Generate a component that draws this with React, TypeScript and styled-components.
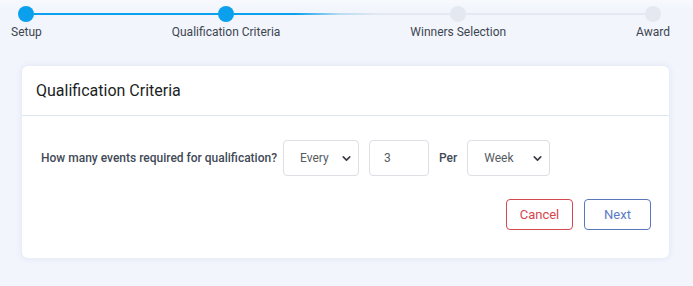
import React, { useState } from 'react';
import styled, { createGlobalStyle } from 'styled-components';
import { ChevronDown } from 'lucide-react';

const GlobalStyle = createGlobalStyle`
  html, body {
    margin: 0;
    padding: 0;
    background: #f2f5fc;
    font-family: Roboto, "Liberation Sans", sans-serif;
  }
`;

const Page = styled.div`
  width: 693px;
  height: 286px;
  background: linear-gradient(#f7f9fd 0, #f2f5fc 10px);
  box-sizing: border-box;
  overflow: hidden;
`;

const Stepper = styled.div`
  position: relative;
  display: flex;
  justify-content: space-between;
  padding: 6px 23px 0 11px;
  height: 66px;
  box-sizing: border-box;
`;

const Track = styled.div`
  position: absolute;
  top: 13px;
  left: 26px;
  right: 40px;
  height: 2px;
  background: linear-gradient(to right, #0aa0ee 0%, #0aa0ee 43%, #b9dcef 50%, #e3e8f2 56%, #e3e8f2 100%);
`;

const Step = styled.div`
  position: relative;
  display: flex;
  flex-direction: column;
  align-items: center;
`;

const Dot = styled.span<{ $active: boolean }>`
  width: 16px;
  height: 16px;
  border-radius: 50%;
  background: ${(p) => (p.$active ? '#0aa0ee' : '#e3e8f1')};
`;

const StepLabel = styled.span`
  margin-top: 3px;
  font-size: 12px;
  line-height: 14px;
  color: #3d4650;
  white-space: nowrap;
`;

const Card = styled.div`
  margin: 0 24px 0 22px;
  background: #fff;
  border-radius: 6px;
  box-shadow: 0 0 6px rgba(180, 195, 225, 0.35);
`;

const CardHeader = styled.div`
  height: 49px;
  display: flex;
  align-items: center;
  padding: 0 14px;
  border-bottom: 1px solid #dbe8f2;
`;

const CardTitle = styled.h3`
  margin: 0;
  font-size: 16px;
  font-weight: 400;
  color: #1c1f24;
`;

const CardBody = styled.div`
  padding: 24px 18px 28px 19px;
`;

const FieldRow = styled.div`
  display: flex;
  align-items: center;
`;

const Question = styled.label`
  font-size: 12px;
  font-weight: 500;
  color: #3f4a57;
  margin-right: 6px;
`;

const SelectWrap = styled.div<{ $width: number }>`
  position: relative;
  width: ${(p) => p.$width}px;
  height: 36px;
`;

const Select = styled.select`
  appearance: none;
  width: 100%;
  height: 100%;
  border: 1px solid #dcdfe4;
  border-radius: 4px;
  background: #fff;
  padding: 0 0 0 16px;
  font-family: Roboto, "Liberation Sans", sans-serif;
  font-size: 12px;
  color: #555b63;
  outline: none;
`;

const Chevron = styled(ChevronDown)`
  position: absolute;
  right: 6px;
  top: 12px;
  pointer-events: none;
  color: #3a3e44;
`;

const NumberInput = styled.input`
  width: 60px;
  height: 36px;
  box-sizing: border-box;
  margin-left: 10px;
  border: 1px solid #dcdfe4;
  border-radius: 4px;
  padding: 0 14px;
  font-family: Roboto, "Liberation Sans", sans-serif;
  font-size: 12px;
  color: #555b63;
  outline: none;
`;

const Per = styled.span`
  margin: 0 10px 0 10px;
  font-size: 12px;
  font-weight: 500;
  color: #3f4a57;
`;

const Actions = styled.div`
  display: flex;
  justify-content: flex-end;
  gap: 11px;
  margin-top: 23px;
`;

const ActionButton = styled.button<{ $tone: 'danger' | 'primary' }>`
  width: 67px;
  height: 31px;
  background: #fff;
  border-radius: 4px;
  border: 1px solid ${(p) => (p.$tone === 'danger' ? '#d5484f' : '#5a78b8')};
  color: ${(p) => (p.$tone === 'danger' ? '#d9444c' : '#5b7bc4')};
  font-family: Roboto, "Liberation Sans", sans-serif;
  font-size: 13px;
  cursor: pointer;
`;

const steps = ['Setup', 'Qualification Criteria', 'Winners Selection', 'Award'];

const App = () => {
  const [count, setCount] = useState('3');
  const current = 1;

  return (
    <Page>
      <GlobalStyle />
      <Stepper>
        <Track />
        {steps.map((s, i) => (
          <Step key={s}>
            <Dot $active={i <= current} />
            <StepLabel>{s}</StepLabel>
          </Step>
        ))}
      </Stepper>
      <Card>
        <CardHeader>
          <CardTitle>Qualification Criteria</CardTitle>
        </CardHeader>
        <CardBody>
          <FieldRow>
            <Question>How many events required for qualification?</Question>
            <SelectWrap $width={76}>
              <Select defaultValue="every">
                <option value="every">Every</option>
              </Select>
              <Chevron size={13} strokeWidth={3} />
            </SelectWrap>
            <NumberInput value={count} onChange={(e) => setCount(e.target.value)} />
            <Per>Per</Per>
            <SelectWrap $width={83}>
              <Select defaultValue="week">
                <option value="week">Week</option>
              </Select>
              <Chevron size={13} strokeWidth={3} />
            </SelectWrap>
          </FieldRow>
          <Actions>
            <ActionButton $tone="danger">Cancel</ActionButton>
            <ActionButton $tone="primary">Next</ActionButton>
          </Actions>
        </CardBody>
      </Card>
    </Page>
  );
};

export default App;
